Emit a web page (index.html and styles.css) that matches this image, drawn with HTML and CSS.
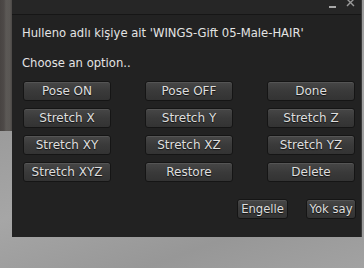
FILE: index.html
```html
<!DOCTYPE html>
<html>
<head>
<meta charset="utf-8">
<link rel="stylesheet" href="styles.css">
</head>
<body>
<div class="scene">
  <div class="dialog">
    <div class="titlebar">
      <span class="minimize"></span>
      <svg class="close" width="9" height="9" viewBox="0 0 9 9"><path d="M1 1L8 8M8 1L1 8" stroke="#9a9a9a" stroke-width="1.4"/></svg>
    </div>
    <div class="content">
      <p class="msg">Hulleno adlı kişiye ait 'WINGS-Gift 05-Male-HAIR'</p>
      <p class="msg prompt">Choose an option..</p>
      <div class="grid">
        <button class="btn">Pose ON</button>
        <button class="btn">Pose OFF</button>
        <button class="btn">Done</button>
        <button class="btn">Stretch X</button>
        <button class="btn">Stretch Y</button>
        <button class="btn">Stretch Z</button>
        <button class="btn">Stretch XY</button>
        <button class="btn">Stretch XZ</button>
        <button class="btn">Stretch YZ</button>
        <button class="btn">Stretch XYZ</button>
        <button class="btn">Restore</button>
        <button class="btn">Delete</button>
      </div>
      <div class="actions">
        <button class="btn small">Engelle</button>
        <button class="btn small">Yok say</button>
      </div>
    </div>
  </div>
</div>
</body>
</html>
```
FILE: styles.css
```css
html, body {
  margin: 0;
  padding: 0;
}
body {
  width: 364px;
  height: 268px;
  overflow: hidden;
  font-family: "DejaVu Sans", sans-serif;
  background:
    linear-gradient(90deg, #484442 0, #4e4a48 4px, #5c5956 6px, #5a5754 10px, #4a4745 12px) top left / 12px 131px no-repeat,
    linear-gradient(160deg, #a4a4a4 0%, #9a9a9a 30%, #a6a6a6 55%, #979797 80%, #a2a2a2 100%);
}
.scene {
  display: flex;
  padding-left: 12px;
}
.dialog {
  width: 349px;
  height: 237px;
  background: #222222;
  border-right: 1px solid #3a3a3a;
  display: flex;
  flex-direction: column;
}
.titlebar {
  height: 15px;
  background: #262626;
  border-bottom: 1px solid #161616;
  display: flex;
  align-items: flex-start;
  justify-content: flex-end;
  gap: 10px;
  padding-right: 6px;
  box-sizing: border-box;
}
.minimize {
  width: 7px;
  height: 2px;
  background: #a8a8a8;
  margin-top: 6px;
}
.close {
  margin-top: -2px;
}
.content {
  padding: 11px 0 0 10px;
}
.msg {
  margin: 0;
  color: #e4e4e4;
  font-size: 11.6px;
  line-height: 14px;
  height: 14px;
}
.prompt {
  margin-top: 16px;
}
.grid {
  margin-top: 11px;
  margin-left: 1px;
  display: grid;
  grid-template-columns: repeat(3, 88px);
  column-gap: 34px;
  row-gap: 7px;
}
.btn {
  height: 20px;
  padding: 0;
  font-family: "DejaVu Sans", sans-serif;
  font-size: 12px;
  color: #dedede;
  text-shadow: 0 1px 1px #111;
  background: linear-gradient(#474747, #3a3a3a 50%, #333333);
  border: 1px solid #151515;
  border-radius: 3px;
  box-shadow: inset 0 1px 0 #555;
}
.actions {
  display: flex;
  justify-content: flex-end;
  gap: 18px;
  margin-top: 17px;
  padding-right: 5px;
}
.small {
  width: 51px;
  white-space: nowrap;
  font-size: 11.6px;
}
.small + .small {
  width: 50px;
}
```
